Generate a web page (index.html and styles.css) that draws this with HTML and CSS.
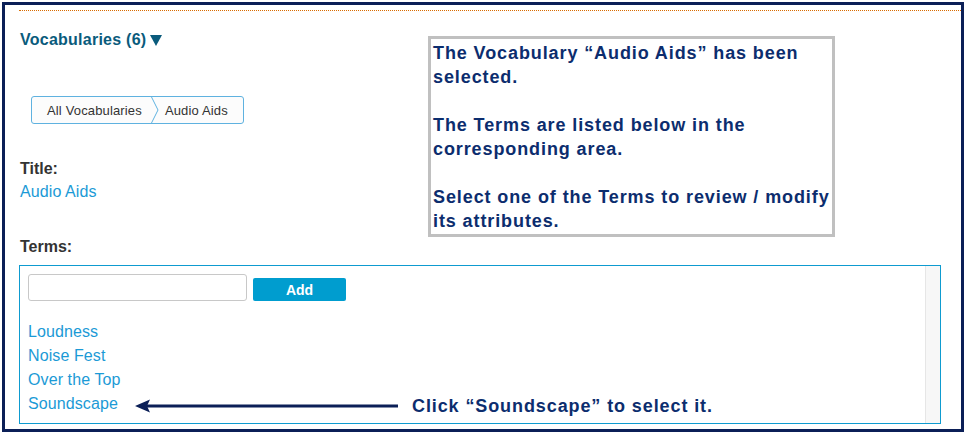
FILE: index.html
```html
<!DOCTYPE html>
<html>
<head>
<meta charset="utf-8">
<link rel="stylesheet" href="styles.css">
</head>
<body>
<div class="frame">
  <div class="rule"></div>
  <div class="content">
    <h2 class="heading">Vocabularies (6) <svg class="caret" width="12" height="11" viewBox="0 0 12 11"><polygon points="0,0 12,0 6,11" fill="#0a5b7c"/></svg></h2>
    <div class="crumbs">
      <span class="crumb first">All Vocabularies</span>
      <svg class="sep" width="8" height="26" viewBox="0 0 8 26"><polyline points="0.5,0 7,13 0.5,26" fill="none" stroke="#5fb2e0" stroke-width="1"/></svg>
      <span class="crumb last">Audio Aids</span>
    </div>
    <div class="label title-label">Title:</div>
    <a class="link title-value">Audio Aids</a>
    <div class="label terms-label">Terms:</div>
    <div class="terms-box">
      <div class="terms-main">
        <div class="add-row">
          <input class="term-input" type="text">
          <button class="add-btn">Add</button>
        </div>
        <ul class="term-list">
          <li><a class="link">Loudness</a></li>
          <li><a class="link">Noise Fest</a></li>
          <li><a class="link">Over the Top</a></li>
          <li><a class="link">Soundscape</a></li>
        </ul>
      </div>
      <div class="scroll-track"></div>
    </div>
  </div>

  <div class="callout">
    <p>The Vocabulary “Audio Aids” has been<br>selected.</p>
    <p>The Terms are listed below in the<br>corresponding area.</p>
    <p>Select one of the Terms to review / modify<br>its attributes.</p>
  </div>

  <svg class="arrow" width="264" height="14" viewBox="0 0 264 14">
    <line x1="12" y1="7" x2="263" y2="7" stroke="#0b1f57" stroke-width="3"/>
    <polygon points="0,7 15,0.5 12,7 15,13.5" fill="#0b1f57"/>
  </svg>
  <div class="click-note">Click “Soundscape” to select it.</div>
</div>
</body>
</html>
```

FILE: styles.css
```css
* { box-sizing: border-box; }
html, body { margin: 0; padding: 0; background: #fff; }
body {
  font-family: "Liberation Sans", Arial, sans-serif;
  width: 966px;
  height: 434px;
  overflow: hidden;
  padding: 2px;
}
.frame {
  position: relative;
  width: 962px;
  height: 430px;
  border: 3px solid #0b1f57;
  overflow: hidden;
}
.rule {
  margin: 5px 0 0 14px;
  border-top: 1px dotted #d96c00;
  height: 0;
}
.content {
  padding-left: 14px;
  display: flex;
  flex-direction: column;
  align-items: flex-start;
}
.heading {
  margin: 19px 0 0 1px;
  font-size: 16px;
  line-height: 20px;
  font-weight: bold;
  color: #0a5b7c;
  letter-spacing: 0.25px;
  display: flex;
  align-items: center;
}
.caret { margin-left: 4px; margin-top: 1px; }
.crumbs {
  margin: 46px 0 0 12px;
  height: 28px;
  display: flex;
  align-items: center;
  border: 1px solid #5fb2e0;
  border-radius: 3px;
  background: #fcfcfc;
  font-size: 13px;
  letter-spacing: 0.15px;
  color: #333;
}
.crumb.first { padding: 0 9px 0 15px; }
.crumb.last { padding: 0 15px 0 6px; }
.sep { display: block; }
.label {
  font-size: 16px;
  font-weight: bold;
  color: #333;
  line-height: 20px;
  margin-left: 1px;
}
.title-label { margin-top: 35px; }
.link {
  color: #1b9ad6;
  font-size: 16px;
  line-height: 20px;
  letter-spacing: 0.1px;
  text-decoration: none;
}
.title-value { margin: 3px 0 0 1px; display: block; }
.terms-label { margin-top: 35px; }
.terms-box {
  margin-top: 8px;
  width: 922px;
  height: 159px;
  border: 1px solid #0e9bd0;
  display: flex;
  overflow: hidden;
}
.terms-main {
  flex: 1;
  padding: 8px 0 0 8px;
}
.add-row {
  display: flex;
  align-items: flex-end;
}
.term-input {
  width: 219px;
  height: 27px;
  border: 1px solid #c8c8c8;
  border-radius: 3px;
  margin: 0;
  padding: 0 6px;
  background: #fff;
}
.add-btn {
  margin-left: 6px;
  width: 93px;
  height: 23px;
  border: none;
  border-radius: 2px;
  background: #009dcf;
  color: #fff;
  font-family: "Liberation Sans", Arial, sans-serif;
  font-weight: bold;
  font-size: 14px;
  padding: 0;
}
.term-list {
  list-style: none;
  margin: 19px 0 0 0;
  padding: 0;
}
.term-list li { line-height: 24px; height: 24px; }
.term-list .link { line-height: 24px; }
.scroll-track {
  width: 15px;
  flex: none;
  background: #f7f7f7;
  border-left: 1px solid #e6e6e6;
}
.callout {
  position: absolute;
  left: 423px;
  top: 31px;
  width: 407px;
  height: 201px;
  border: 3px solid #c0c0c0;
  background: #fff;
  padding: 2px 0 0 2px;
  color: #0c2d6e;
  font-weight: bold;
  font-size: 18px;
  line-height: 24px;
  letter-spacing: 0.9px;
  white-space: nowrap;
}
.callout p { margin: 0 0 24px 0; }
.arrow {
  position: absolute;
  left: 130px;
  top: 394px;
}
.click-note {
  position: absolute;
  left: 407px;
  top: 389px;
  color: #0c2d6e;
  font-weight: bold;
  font-size: 18px;
  line-height: 24px;
  letter-spacing: 0.9px;
  white-space: nowrap;
}
```
